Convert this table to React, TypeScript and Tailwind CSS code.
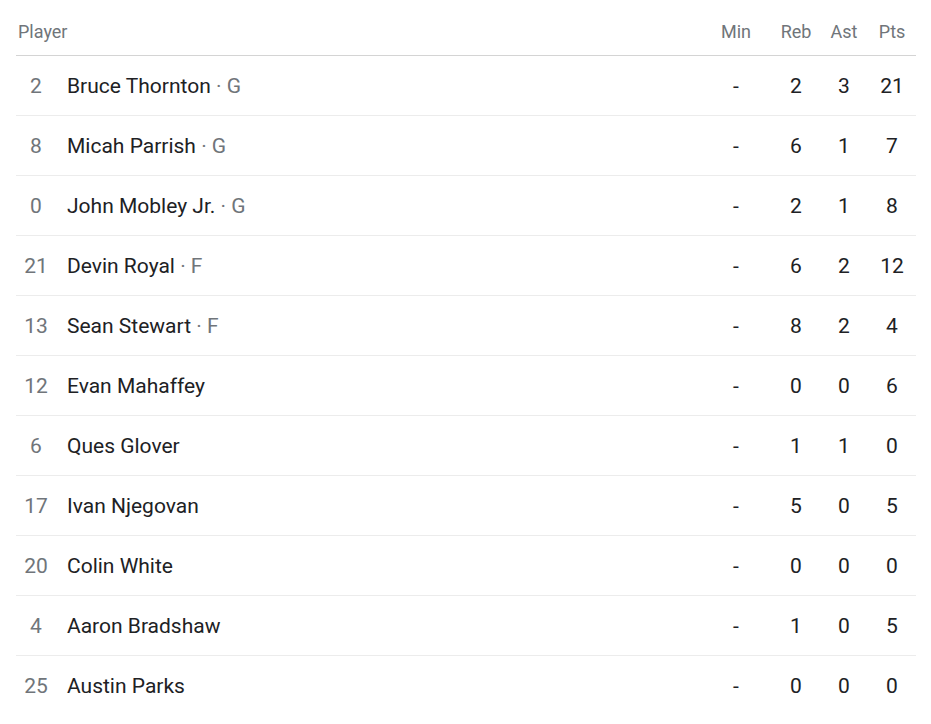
import React from "react";

type Row = { n: string; name: string; pos?: string; min: string; reb: string; ast: string; pts: string };

const rows: Row[] = [
  { n: "2", name: "Bruce Thornton", pos: "G", min: "-", reb: "2", ast: "3", pts: "21" },
  { n: "8", name: "Micah Parrish", pos: "G", min: "-", reb: "6", ast: "1", pts: "7" },
  { n: "0", name: "John Mobley Jr.", pos: "G", min: "-", reb: "2", ast: "1", pts: "8" },
  { n: "21", name: "Devin Royal", pos: "F", min: "-", reb: "6", ast: "2", pts: "12" },
  { n: "13", name: "Sean Stewart", pos: "F", min: "-", reb: "8", ast: "2", pts: "4" },
  { n: "12", name: "Evan Mahaffey", min: "-", reb: "0", ast: "0", pts: "6" },
  { n: "6", name: "Ques Glover", min: "-", reb: "1", ast: "1", pts: "0" },
  { n: "17", name: "Ivan Njegovan", min: "-", reb: "5", ast: "0", pts: "5" },
  { n: "20", name: "Colin White", min: "-", reb: "0", ast: "0", pts: "0" },
  { n: "4", name: "Aaron Bradshaw", min: "-", reb: "1", ast: "0", pts: "5" },
  { n: "25", name: "Austin Parks", min: "-", reb: "0", ast: "0", pts: "0" },
];

export default function App() {
  return (
    <div className="bg-white pl-4 pr-[15px] min-h-[724px]" style={{ fontFamily: "Roboto, 'Noto Sans', sans-serif" }}>
      <div className="flex items-end h-[56px] pb-[13px] border-b border-[#d4d4d4] text-[18px] leading-[21px] text-[#70757a]">
        <div className="flex-1 pl-[2px]">Player</div>
        <div className="w-[48px] text-center">Min</div>
        <div className="w-[12px]" />
        <div className="w-[48px] text-center">Reb</div>
        <div className="w-[48px] text-center">Ast</div>
        <div className="w-[48px] text-center">Pts</div>
      </div>
      {rows.map((r, i) => (
        <div
          key={i}
          className={`flex items-center h-[60px] pt-[2px] text-[21px] ${i < rows.length - 1 ? "border-b border-[#ececec]" : ""}`}
        >
          <div className="w-[40px] text-center text-[#70757a]">{r.n}</div>
          <div className="flex-1 pl-[11px] text-[#202124]">
            {r.name}
            {r.pos && <span className="text-[#70757a]"> · {r.pos}</span>}
          </div>
          <div className="w-[48px] text-center text-[#202124]">{r.min}</div>
          <div className="w-[12px]" />
          <div className="w-[48px] text-center text-[#202124]">{r.reb}</div>
          <div className="w-[48px] text-center text-[#202124]">{r.ast}</div>
          <div className="w-[48px] text-center text-[#202124]">{r.pts}</div>
        </div>
      ))}
    </div>
  );
}
